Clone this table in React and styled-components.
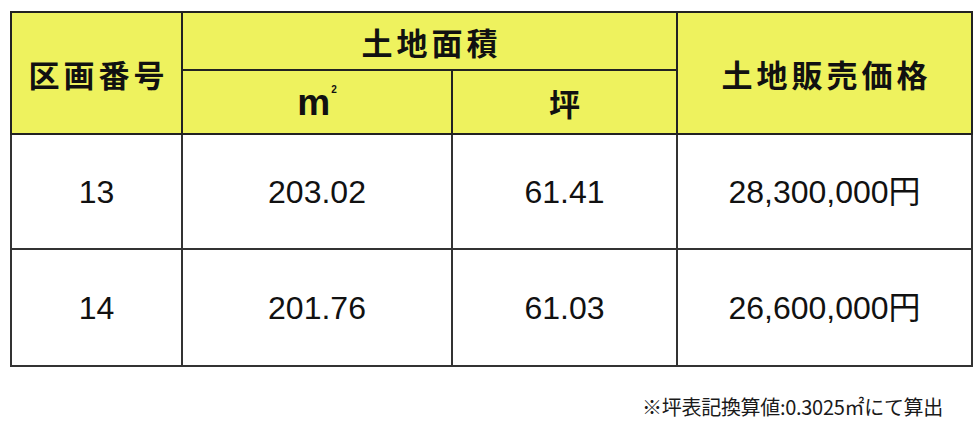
import React from 'react';
import styled, { createGlobalStyle } from 'styled-components';

const GlobalStyle = createGlobalStyle`
    html, body {
        margin: 0;
        padding: 0;
        background: #fff;
    }
`;

const Page = styled.div`
    width: 980px;
    height: 430px;
    padding: 11px 0 0 10px;
    box-sizing: border-box;
    font-family: "Liberation Sans", "Noto Sans CJK JP", sans-serif;
    color: #111;
`;

const Table = styled.table`
    width: 961px;
    table-layout: fixed;
    border-collapse: collapse;
    border: 2px solid #2a2a2a;
`;

const HeaderRow = styled.tr`
    height: ${(p) => p.$h}px;
    background: #eef25e;
`;

const HeaderCell = styled.th`
    border: 2px solid #222;
    padding: 0;
    text-align: center;
    vertical-align: middle;
    font-family: "Noto Sans CJK JP", "Liberation Sans", sans-serif;
    font-weight: 700;
    font-size: ${(p) => p.$size || 31}px;
    letter-spacing: ${(p) => p.$spacing ?? 4}px;
    text-indent: ${(p) => p.$spacing ?? 4}px;
    line-height: 1;
`;

const Unit = styled.span`
    font-family: "Liberation Sans", sans-serif;
    font-weight: 700;
    font-size: 37px;
    sup {
        font-size: 10px;
        vertical-align: 22px;
        margin-left: 1px;
    }
`;

const DataRow = styled.tr`
    height: ${(p) => p.$h}px;
`;

const DataCell = styled.td`
    border: 2px solid #333;
    padding: 0;
    text-align: center;
    vertical-align: middle;
    font-size: 32px;
    line-height: 1;
`;

const Note = styled.div`
    width: 961px;
    margin-top: 25px;
    padding-right: 28px;
    box-sizing: border-box;
    text-align: right;
    font-family: "Noto Sans CJK JP", sans-serif;
    font-size: 20px;
    letter-spacing: -0.3px;
    color: #1a1a1a;
`;

const lots = [
    { id: 13, sqm: '203.02', tsubo: '61.41', price: '28,300,000円', h: 115 },
    { id: 14, sqm: '201.76', tsubo: '61.03', price: '26,600,000円', h: 117 },
];

const App = () => (
    <>
        <GlobalStyle />
        <Page>
            <Table>
                <colgroup>
                    <col style={{ width: 171 }} />
                    <col style={{ width: 270 }} />
                    <col style={{ width: 225 }} />
                    <col style={{ width: 295 }} />
                </colgroup>
                <thead>
                <HeaderRow $h={58}>
                    <HeaderCell rowSpan={2}>区画番号</HeaderCell>
                    <HeaderCell colSpan={2}>土地面積</HeaderCell>
                    <HeaderCell rowSpan={2}>土地販売価格</HeaderCell>
                </HeaderRow>
                <HeaderRow $h={64}>
                    <HeaderCell $spacing={0}>
                        <Unit>m<sup>2</sup></Unit>
                    </HeaderCell>
                    <HeaderCell $spacing={0}>坪</HeaderCell>
                </HeaderRow>
                </thead>
                <tbody>
                {lots.map((lot) => (
                    <DataRow key={lot.id} $h={lot.h}>
                        <DataCell>{lot.id}</DataCell>
                        <DataCell>{lot.sqm}</DataCell>
                        <DataCell>{lot.tsubo}</DataCell>
                        <DataCell>{lot.price}</DataCell>
                    </DataRow>
                ))}
                </tbody>
            </Table>
            <Note>※坪表記換算値:0.3025㎡にて算出</Note>
        </Page>
    </>
);

export default App;
